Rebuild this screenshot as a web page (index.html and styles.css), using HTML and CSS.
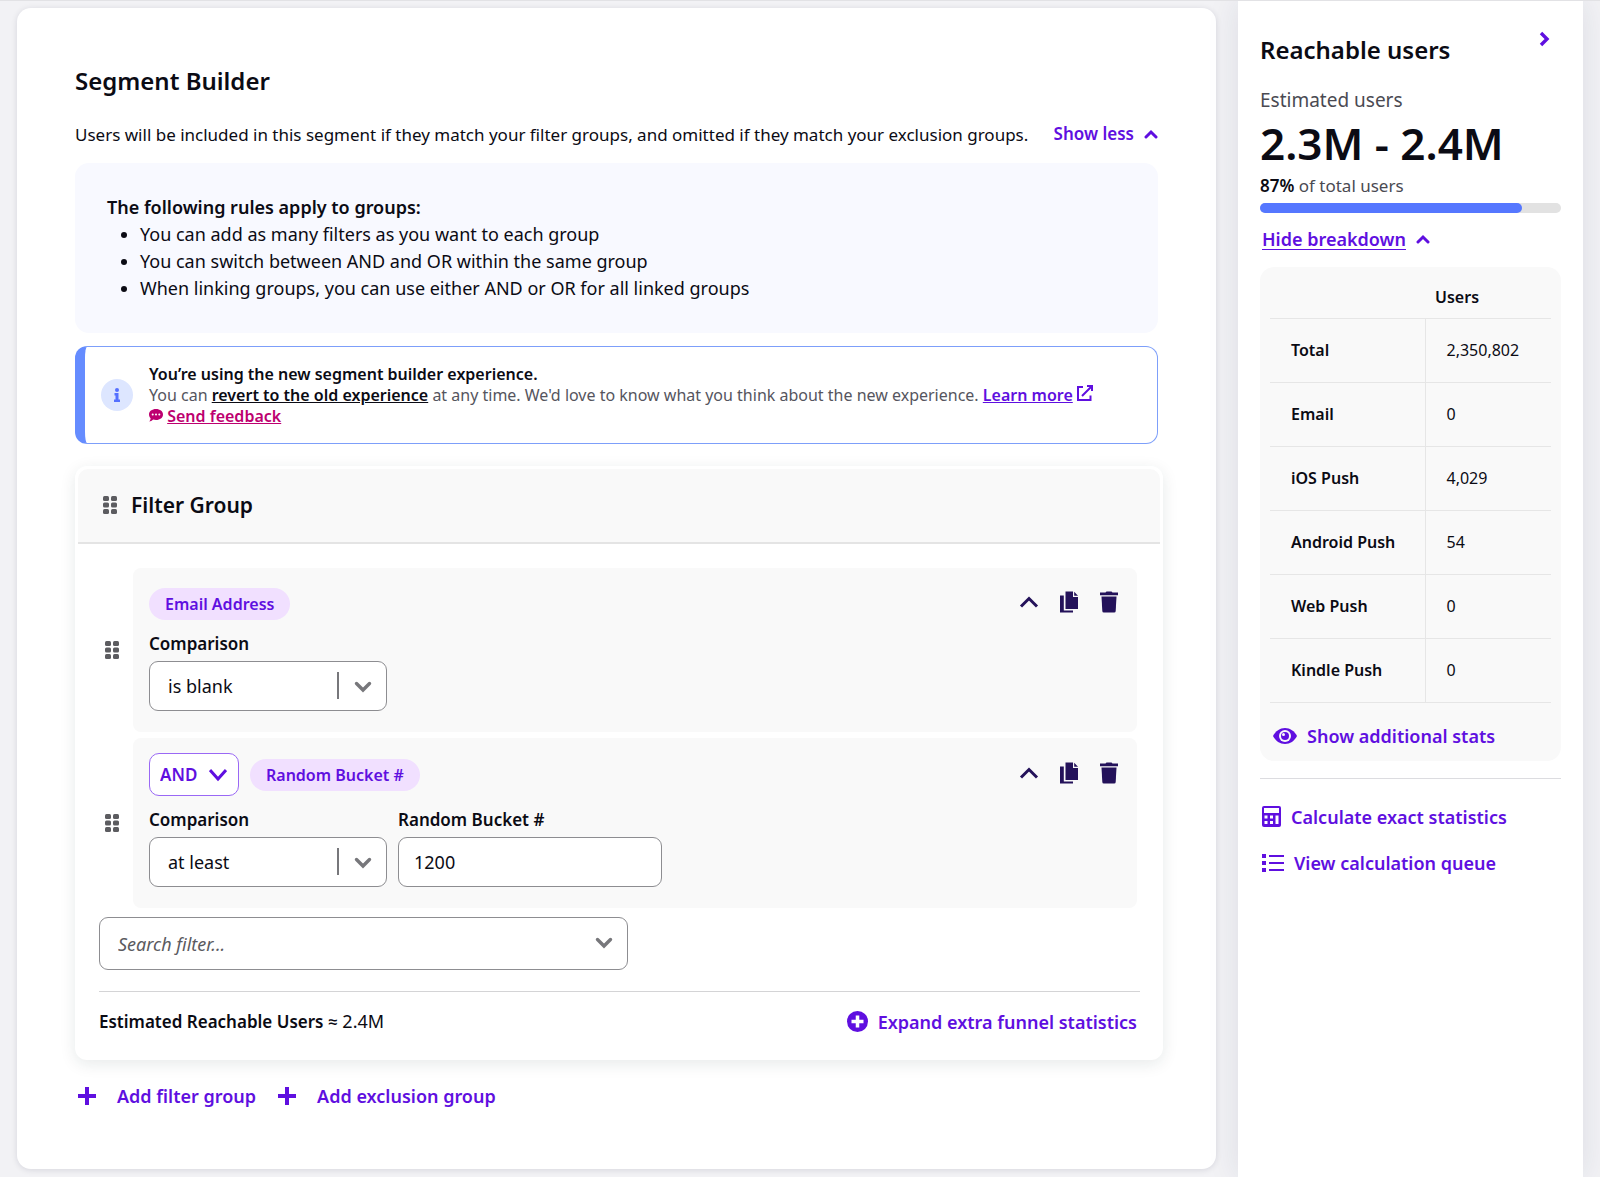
FILE: index.html
```html
<!DOCTYPE html>
<html lang="en">

<head>
    <meta charset="UTF-8">
    <meta name="viewport" content="width=device-width, initial-scale=1.0">
    <title>Segment Builder</title>
    <link rel="stylesheet" href="styles.css">
</head>

<body>
    <!-- shared icons -->
    <svg class="sprite" aria-hidden="true">
        <symbol id="up" viewBox="0 0 14 10">
            <path d="M2 8l5-5 5 5" fill="none" stroke="currentColor" stroke-width="3" stroke-linecap="round" />
        </symbol>
        <symbol id="down" viewBox="0 0 18 12">
            <path d="M2.500 2.500L9 9l6.500-6.500" fill="none" stroke="currentColor" stroke-width="3.400" stroke-linecap="round" />
        </symbol>
        <symbol id="collapse" viewBox="0 0 20 22">
            <path d="M2 15.500L10 7.500l8 8" fill="none" stroke="currentColor" stroke-width="3" />
        </symbol>
        <symbol id="copy" viewBox="0 0 20 22">
            <path d="M6.500 .5h7.500v5.500h5v12H6.500z" fill="currentColor" />
            <path d="M15.200 .8l3.800 3.900h-3.800z" fill="currentColor" />
            <path d="M1 4.500h3.800v15H14v2H1z" fill="currentColor" />
        </symbol>
        <symbol id="trash" viewBox="0 0 20 22">
            <path d="M1 1.500h5.500l1-1h5l1 1H19v2.700H1z" fill="currentColor" />
            <path d="M2.500 5.500h15l-.8 14.500q-.1 1.500-1.500 1.500H4.800q-1.400 0-1.500-1.500z" fill="currentColor" />
        </symbol>
        <symbol id="grip" viewBox="0 0 14 20">
            <g fill="currentColor">
                <rect x="0" y="1" width="6" height="5" rx="1.500" />
                <rect x="8" y="1" width="6" height="5" rx="1.500" />
                <rect x="0" y="7.500" width="6" height="5" rx="1.500" />
                <rect x="8" y="7.500" width="6" height="5" rx="1.500" />
                <rect x="0" y="14" width="6" height="5" rx="1.500" />
                <rect x="8" y="14" width="6" height="5" rx="1.500" />
            </g>
        </symbol>
        <symbol id="plus" viewBox="0 0 18 18">
            <path d="M9 0v18M0 9h18" stroke="currentColor" stroke-width="4" />
        </symbol>
    </svg>

    <main class="builder">
        <h1>Segment Builder</h1>
        <div class="intro">
            <p>Users will be included in this segment if they match your filter groups, and omitted if they match your exclusion groups.</p>
            <button class="link-btn show-less">Show less <svg width="14" height="10"><use href="#up" /></svg></button>
        </div>

        <section class="rules">
            <strong>The following rules apply to groups:</strong>
            <ul>
                <li>You can add as many filters as you want to each group</li>
                <li>You can switch between AND and OR within the same group</li>
                <li>When linking groups, you can use either AND or OR for all linked groups</li>
            </ul>
        </section>

        <section class="notice">
            <svg class="info" width="32" height="32" viewBox="0 0 32 32">
                <circle cx="16" cy="16" r="16" fill="#dde6ff" />
                <circle cx="16" cy="11" r="2" fill="#5570ff" />
                <path d="M13.500 14h4v6.500h1.500V23h-6v-2.500h1.500V16.500h-1z" fill="#5570ff" />
            </svg>
            <div>
                <strong>You’re using the new segment builder experience.</strong>
                <p>You can <a class="revert" href="#">revert to the old experience</a> at any time. We'd love to know what you think about the new experience. <a class="learn" href="#">Learn more</a>
                    <svg class="external" width="16" height="16" viewBox="0 0 16 16" fill="none" stroke="currentColor" stroke-width="2">
                        <path d="M6 2H1v13h12.500v-4.500M5 11l9-9" />
                        <path d="M10 1h5v5" />
                    </svg>
                </p>
                <p class="feedback">
                    <svg width="14" height="13" viewBox="0 0 14 13">
                        <path d="M7 0c4 0 7 2.300 7 5.500S11 11 7 11c-1 0-2-.2-2.800-.5C3 11.600 1.500 12.500.2 12.500c.9-1 1.400-2 1.400-3.200C.6 8.300 0 7 0 5.500 0 2.300 3 0 7 0z" fill="currentColor" />
                        <g fill="#fff">
                            <circle cx="3.700" cy="5.500" r="1" />
                            <circle cx="7" cy="5.500" r="1" />
                            <circle cx="10.300" cy="5.500" r="1" />
                        </g>
                    </svg>
                    <a href="#">Send feedback</a>
                </p>
            </div>
        </section>

        <section class="group">
            <header>
                <svg class="grip" width="14" height="20"><use href="#grip" /></svg>
                <h2>Filter Group</h2>
            </header>
            <div class="group-body">
                <div class="row">
                    <svg class="grip" width="14" height="20"><use href="#grip" /></svg>
                    <div class="filter">
                        <div class="filter-top">
                            <span class="pill">Email Address</span>
                            <div class="actions">
                                <button aria-label="Collapse"><svg width="20" height="22"><use href="#collapse" /></svg></button>
                                <button aria-label="Duplicate"><svg width="20" height="22"><use href="#copy" /></svg></button>
                                <button aria-label="Delete"><svg width="20" height="22"><use href="#trash" /></svg></button>
                            </div>
                        </div>
                        <div class="fields">
                            <div class="field">
                                <label for="cmp1">Comparison</label>
                                <div class="select">
                                    <select id="cmp1">
                                        <option>is blank</option>
                                        <option>is not blank</option>
                                    </select>
                                    <svg width="18" height="12"><use href="#down" /></svg>
                                </div>
                            </div>
                        </div>
                    </div>
                </div>

                <div class="row">
                    <svg class="grip" width="14" height="20"><use href="#grip" /></svg>
                    <div class="filter linked">
                        <div class="filter-top">
                            <div class="operator">
                                <select aria-label="Operator">
                                    <option>AND</option>
                                    <option>OR</option>
                                </select>
                                <svg width="18" height="14" viewBox="0 0 18 14" fill="none" stroke="currentColor" stroke-width="3">
                                    <path d="M1 2l8 9 8-9" />
                                </svg>
                            </div>
                            <span class="pill">Random Bucket #</span>
                            <div class="actions">
                                <button aria-label="Collapse"><svg width="20" height="22"><use href="#collapse" /></svg></button>
                                <button aria-label="Duplicate"><svg width="20" height="22"><use href="#copy" /></svg></button>
                                <button aria-label="Delete"><svg width="20" height="22"><use href="#trash" /></svg></button>
                            </div>
                        </div>
                        <div class="fields">
                            <div class="field">
                                <label for="cmp2">Comparison</label>
                                <div class="select">
                                    <select id="cmp2">
                                        <option>at least</option>
                                        <option>at most</option>
                                    </select>
                                    <svg width="18" height="12"><use href="#down" /></svg>
                                </div>
                            </div>
                            <div class="field wide">
                                <label for="bucket">Random Bucket #</label>
                                <input id="bucket" type="text" value="1200">
                            </div>
                        </div>
                    </div>
                </div>

                <div class="search">
                    <input type="text" aria-label="Search filter" placeholder="Search filter...">
                    <svg width="18" height="12"><use href="#down" /></svg>
                </div>

                <footer>
                    <p><strong>Estimated Reachable Users ≈</strong> 2.4M</p>
                    <button class="link-btn">
                        <svg width="21" height="21" viewBox="0 0 21 21">
                            <circle cx="10.500" cy="10.500" r="10.500" fill="currentColor" />
                            <path d="M10.500 4.500v12M4.500 10.500h12" stroke="#fff" stroke-width="3.500" />
                        </svg>
                        Expand extra funnel statistics
                    </button>
                </footer>
            </div>
        </section>

        <div class="add">
            <button class="link-btn"><svg width="18" height="18"><use href="#plus" /></svg>Add filter group</button>
            <button class="link-btn"><svg width="18" height="18"><use href="#plus" /></svg>Add exclusion group</button>
        </div>
    </main>

    <aside class="reach">
        <div class="reach-head">
            <h2>Reachable users</h2>
            <button class="link-btn" aria-label="Collapse panel">
                <svg width="12" height="16" viewBox="0 0 12 16" fill="none" stroke="currentColor" stroke-width="3.400">
                    <path d="M2 2l6 6-6 6" />
                </svg>
            </button>
        </div>
        <p class="est">Estimated users</p>
        <p class="range">2.3M - 2.4M</p>
        <p class="share"><b>87%</b> of total users</p>
        <div class="bar">
            <div class="fill" style="width: 87%"></div>
        </div>
        <button class="link-btn breakdown"><span>Hide breakdown</span><svg width="14" height="10"><use href="#up" /></svg></button>

        <div class="stats">
            <table>
                <thead>
                    <tr><td></td><th scope="col">Users</th></tr>
                </thead>
                <tbody>
                    <tr><th scope="row">Total</th><td>2,350,802</td></tr>
                    <tr><th scope="row">Email</th><td>0</td></tr>
                    <tr><th scope="row">iOS Push</th><td>4,029</td></tr>
                    <tr><th scope="row">Android Push</th><td>54</td></tr>
                    <tr><th scope="row">Web Push</th><td>0</td></tr>
                    <tr><th scope="row">Kindle Push</th><td>0</td></tr>
                </tbody>
            </table>
            <button class="link-btn">
                <svg width="24" height="16" viewBox="0 0 24 16">
                    <path d="M12 0c5 0 9.500 3 12 8-2.500 5-7 8-12 8S2.500 13 0 8C2.500 3 7 0 12 0z" fill="currentColor" />
                    <circle cx="12" cy="8" r="6" fill="#f9f9f9" />
                    <circle cx="12" cy="8" r="4" fill="currentColor" />
                    <circle cx="10.500" cy="6.500" r="1.500" fill="#f9f9f9" />
                </svg>
                Show additional stats
            </button>
        </div>

        <div class="more">
            <button class="link-btn">
                <svg width="19" height="21" viewBox="0 0 19 21">
                    <rect width="19" height="21" rx="2" fill="currentColor" />
                    <g fill="#fff">
                        <rect x="2" y="2" width="15" height="5" />
                        <rect x="2.500" y="9.500" width="3" height="3" />
                        <rect x="8" y="9.500" width="3" height="3" />
                        <rect x="2.500" y="15" width="3" height="3" />
                        <rect x="8" y="15" width="3" height="3" />
                        <rect x="13.500" y="9.500" width="3" height="8.500" />
                    </g>
                </svg>
                Calculate exact statistics
            </button>
            <button class="link-btn">
                <svg width="22" height="18" viewBox="0 0 22 18" fill="currentColor">
                    <path d="M0 0h4v4H0zM0 7h4v4H0zM0 14h4v4H0zM7 1h15v2H7zM7 8h15v2H7zM7 15h15v2H7z" />
                </svg>
                View calculation queue
            </button>
        </div>
    </aside>
</body>

</html>
```
FILE: styles.css
```css
* {
    box-sizing: border-box;
    margin: 0;
    padding: 0;
}

body {
    display: flex;
    gap: 22px;
    min-height: 100vh;
    padding-right: 17px;
    padding-left: 17px;
    border-top: 1px solid #e2e2e5;
    background-color: #f2f2f5;
    color: #0b0b14;
    font-family: "Noto Sans", "Open Sans", sans-serif;
    font-size: 18px;
    line-height: 24px;
}

button,
input,
select {
    font: inherit;
    color: inherit;
}

button {
    border: none;
    background: none;
    cursor: pointer;
}

svg {
    flex-shrink: 0;
}

strong,
b,
th,
label {
    font-weight: 600;
}

.sprite {
    position: absolute;
    width: 0;
    height: 0;
}

.link-btn {
    display: flex;
    align-items: center;
    gap: 10px;
    color: #5f0fe0;
    font-weight: 600;
}

/* left card */
.builder {
    flex: 1;
    margin: 7px 0 8px;
    padding: 57px 58px;
    border-radius: 14px;
    background-color: #fff;
    box-shadow: 0 1px 6px rgba(20, 20, 50, .12);
}

h1,
.reach h2 {
    font-size: 24px;
    line-height: 32px;
    font-weight: 600;
}

.intro {
    display: flex;
    justify-content: space-between;
    margin: 24px 0 16px;
    font-size: 17px;
}

.intro p {
    padding-top: 2px;
}

.show-less {
    white-space: nowrap;
}

.rules {
    padding: 31px 32px;
    border-radius: 14px;
    background-color: #f8f9ff;
    line-height: 27px;
}

.rules ul {
    padding-left: 33px;
}

.notice {
    display: flex;
    align-items: center;
    gap: 16px;
    min-height: 98px;
    margin-top: 13px;
    padding: 0 16px;
    border: 1px solid #7d9ffa;
    border-left: 10px solid #658cff;
    border-radius: 12px;
    font-size: 16px;
    line-height: 21px;
    color: #55555e;
}

.notice strong,
.revert {
    color: #0b0b14;
    font-weight: 600;
}

.learn,
.external {
    color: #5f0fe0;
    font-weight: 600;
}

.feedback,
.feedback a {
    color: #bd0070;
    font-weight: 600;
}

/* filter group */
.group {
    margin-top: 22px;
    margin-right: -5px;
    padding: 3px;
    border-radius: 12px;
    background-color: #fff;
    box-shadow: 0 4px 16px rgba(20, 50, 50, .1);
}

.group header {
    display: flex;
    align-items: center;
    gap: 14px;
    height: 75px;
    padding: 0 25px 2px;
    border-bottom: 2px solid #e4e4e4;
    border-radius: 10px 10px 0 0;
    background-color: #f9f9f9;
}

.group h2 {
    font-size: 21px;
    font-weight: 600;
}

.grip {
    color: #5c5c60;
}

.group-body {
    padding: 24px 20px 23px 21px;
}

.row {
    display: flex;
    align-items: center;
    gap: 14px;
    margin: 0 3px 6px 6px;
}

.filter {
    flex: 1;
    padding: 20px 18px 21px 16px;
    border-radius: 8px;
    background-color: #f9f9f9;
}

.linked {
    padding-top: 15px;
}

.filter-top {
    display: flex;
    align-items: center;
    gap: 11px;
}

.pill {
    padding: 4px 16px;
    border-radius: 16px;
    background-color: #f1e0ff;
    color: #5f0fe0;
    font-size: 16px;
    font-weight: 600;
}

.actions {
    display: flex;
    gap: 20px;
    margin-left: auto;
    padding-bottom: 4px;
}

.actions button {
    display: flex;
    color: #24125a;
}

.operator {
    position: relative;
    width: 90px;
    color: #5f0fe0;
}

.operator select {
    width: 100%;
    height: 43px;
    padding-left: 10px;
    border: 1px solid #9a68f5;
    border-radius: 10px;
    background-color: #fff;
    font-size: 17px;
    font-weight: 600;
    appearance: none;
}

.operator svg {
    position: absolute;
    top: 15px;
    right: 12px;
    pointer-events: none;
}

.fields {
    display: flex;
    gap: 11px;
    margin-top: 12px;
}

.field {
    width: 238px;
}

.wide {
    width: 264px;
}

label {
    display: block;
    margin-bottom: 5px;
    font-size: 17px;
}

.select,
.search {
    position: relative;
}

.select select,
.field input,
.search input {
    display: block;
    width: 100%;
    height: 50px;
    padding: 0 18px;
    border: 1px solid #8d8d91;
    border-radius: 9px;
    background-color: #fff;
    appearance: none;
}

.field input {
    padding: 0 15px;
}

/* divider before the arrow */
.select::after {
    content: "";
    position: absolute;
    top: 11px;
    right: 48px;
    width: 2px;
    height: 27px;
    background-color: #77777b;
}

.select svg,
.search svg {
    position: absolute;
    top: 20px;
    right: 15px;
    color: #77777b;
    pointer-events: none;
}

.search {
    width: 529px;
    margin-top: 9px;
}

.search input {
    height: 53px;
}

.search input::placeholder {
    color: #5a5a60;
    font-style: italic;
    opacity: 1;
}

.group footer {
    display: flex;
    align-items: center;
    justify-content: space-between;
    margin-top: 21px;
    padding: 17px 3px 0 0;
    border-top: 1px solid #d4d4d6;
}

.group footer strong {
    font-size: 17px;
}

.add {
    display: flex;
    gap: 22px;
    margin-top: 24px;
    padding-left: 3px;
}

.add .link-btn {
    gap: 21px;
}

/* right panel */
.reach {
    width: 345px;
    padding: 21px 22px;
    background-color: #fff;
    box-shadow: 0 0 30px rgba(30, 40, 80, .1);
}

.reach-head {
    display: flex;
    align-items: flex-start;
    justify-content: space-between;
    padding-right: 10px;
}

.reach-head h2 {
    padding-top: 12px;
}

.reach-head button {
    padding-top: 9px;
}

.est {
    margin-top: 21px;
    color: #4a4a52;
    font-size: 19px;
    line-height: 26px;
}

.range {
    font-size: 44px;
    line-height: 61px;
    font-weight: 600;
}

.share {
    color: #4a4a52;
    font-size: 17px;
}

.share b {
    color: #0b0b14;
}

.bar {
    height: 10px;
    margin-top: 5px;
    border-radius: 5px;
    background-color: #e2e2e2;
}

.fill {
    height: 100%;
    border-radius: 5px;
    background-color: #5577ff;
}

.breakdown {
    margin: 14px 0 16px 2px;
}

.breakdown span {
    text-decoration: underline;
    text-underline-offset: 3px;
}

.stats {
    padding: 10px 10px 13px;
    border-radius: 14px;
    background-color: #f9f9f9;
}

table {
    width: 100%;
    border-collapse: collapse;
    font-size: 16px;
    text-align: left;
}

thead th {
    height: 41px;
    padding-left: 10px;
}

tbody tr {
    height: 64px;
    border-top: 1px solid #e6e6e6;
    border-bottom: 1px solid #e6e6e6;
}

tbody th {
    width: 155px;
    padding-left: 21px;
    border-right: 1px solid #e6e6e6;
}

tbody td {
    padding-left: 21px;
}

.stats .link-btn {
    margin: 21px 0 0 3px;
}

.more {
    display: flex;
    flex-direction: column;
    gap: 22px;
    margin-top: 17px;
    padding: 26px 2px;
    border-top: 1px solid #dcdce0;
}
```
